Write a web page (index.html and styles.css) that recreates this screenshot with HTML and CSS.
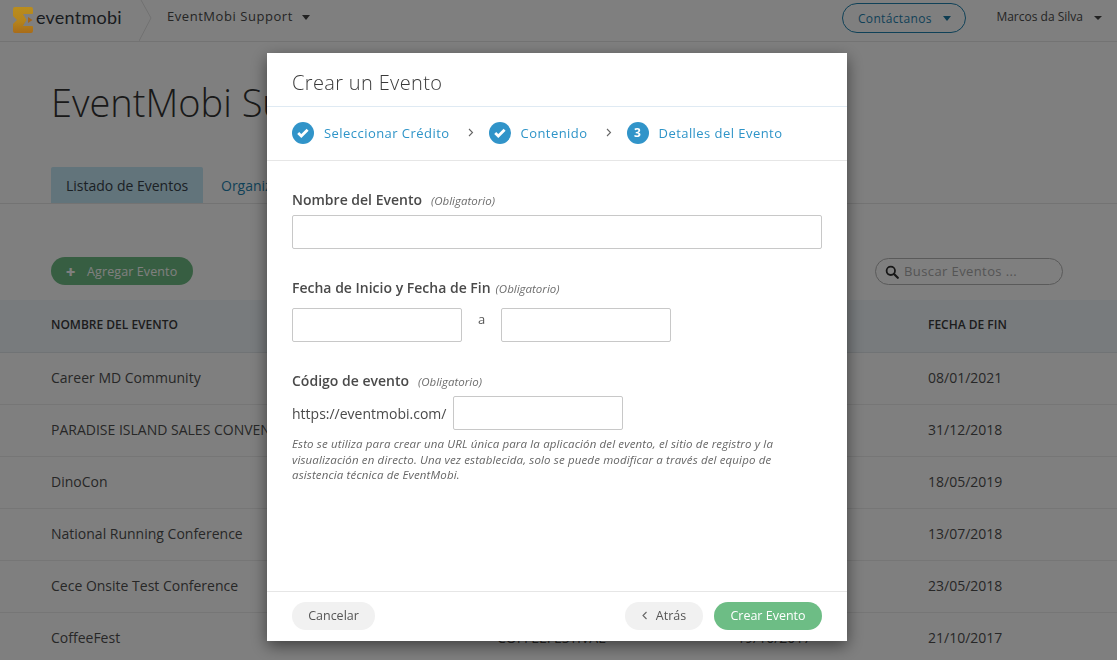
FILE: index.html
```html
<!DOCTYPE html>
<html lang="es">
<head>
<meta charset="utf-8">
<title>Crear un Evento</title>
<link rel="stylesheet" href="styles.css">
</head>
<body>
<div class="page">
  <header class="topbar">
    <div class="brand">
      <svg class="logo-mark" width="20" height="26" viewBox="0 0 20 26"><defs><linearGradient id="logo-fill" x1="0" y1="0" x2="0" y2="1"><stop offset="0" stop-color="#b98d1e"/><stop offset=".55" stop-color="#b5841c"/><stop offset="1" stop-color="#a86c1a"/></linearGradient></defs><path d="M2 0h16a2 2 0 0 1 2 2v4a1 1 0 0 1-1 1h-9l3.500 6l-3.500 6h9a1 1 0 0 1 1 1v4a2 2 0 0 1-2 2h-16a2 2 0 0 1-2-2v-7l4-4l-4-4v-7a2 2 0 0 1 2-2z" fill="url(#logo-fill)"/><path d="M15 10l4.500 3l-4.500 3z" fill="#a5651a"/></svg>
      <span class="logo-text">eventmobi</span>
    </div>
    <svg class="crumb" width="16" height="41" viewBox="0 0 16 41"><path d="M2 0l10 18l-12 23" fill="none" stroke="#e2e2e2"/></svg>
    <div class="org">EventMobi Support<span class="caret"></span></div>
    <div class="top-right">
      <div class="contact">Contáctanos<span class="caret caret-blue"></span></div>
      <div class="user">Marcos da Silva<span class="caret caret-small"></span></div>
    </div>
  </header>
  <h1 class="page-title">EventMobi Support</h1>
  <nav class="tabs">
    <div class="tab tab-active">Listado de Eventos</div>
    <div class="tab tab-link">Organizadores</div>
  </nav>
  <div class="tools">
    <div class="add-btn"><span class="plus">✚</span>Agregar Evento</div>
    <div class="search">
      <svg width="14" height="14" viewBox="0 0 14 14"><circle cx="5.800" cy="5.800" r="4.200" fill="none" stroke="#2e2e2e" stroke-width="1.800"/><path d="M9 9l3.800 3.800" stroke="#2e2e2e" stroke-width="2.200" stroke-linecap="round"/></svg>
      <span>Buscar Eventos ...</span>
    </div>
  </div>
  <div class="table">
    <div class="row row-head"><div>NOMBRE DEL EVENTO</div><div>CÓDIGO DE EVENTO</div><div>FECHA DE INICIO<span class="caret caret-small"></span></div><div>FECHA DE FIN</div></div>
    <div class="row"><div>Career MD Community</div><div>CAREERMD</div><div>06/01/2021</div><div>08/01/2021</div></div>
    <div class="row"><div>PARADISE ISLAND SALES CONVENTION</div><div>PARADISE</div><div>28/12/2018</div><div>31/12/2018</div></div>
    <div class="row"><div>DinoCon</div><div>DINOCON</div><div>16/05/2019</div><div>18/05/2019</div></div>
    <div class="row"><div>National Running Conference</div><div>RUNNING</div><div>11/07/2018</div><div>13/07/2018</div></div>
    <div class="row"><div>Cece Onsite Test Conference</div><div>CECETEST</div><div>21/05/2018</div><div>23/05/2018</div></div>
    <div class="row"><div>CoffeeFest</div><div>COFFEEFESTIVAL</div><div>19/10/2017</div><div>21/10/2017</div></div>
  </div>
</div>
<div class="overlay"></div>
<section class="modal">
  <h2 class="modal-title">Crear un Evento</h2>
  <div class="steps">
    <span class="step-icon"><svg width="12" height="10" viewBox="0 0 12 10"><path d="M1.200 5l3.100 3l6.300-6.300" fill="none" stroke="#fff" stroke-width="2.800"/></svg></span>
    <span class="step-label">Seleccionar Crédito</span>
    <svg class="chev" width="6" height="9" viewBox="0 0 6 9"><path d="M1 1l3.500 3.500l-3.500 3.500" fill="none" stroke="#666" stroke-width="1.100"/></svg>
    <span class="step-icon"><svg width="12" height="10" viewBox="0 0 12 10"><path d="M1.200 5l3.100 3l6.300-6.300" fill="none" stroke="#fff" stroke-width="2.800"/></svg></span>
    <span class="step-label">Contenido</span>
    <svg class="chev" width="6" height="9" viewBox="0 0 6 9"><path d="M1 1l3.500 3.500l-3.500 3.500" fill="none" stroke="#666" stroke-width="1.100"/></svg>
    <span class="step-icon step-num">3</span>
    <span class="step-label">Detalles del Evento</span>
  </div>
  <div class="modal-body">
    <div class="field field-name">
      <div class="label">Nombre del Evento<em>(Obligatorio)</em></div>
      <div class="input input-full"></div>
    </div>
    <div class="field field-date">
      <div class="label">Fecha de Inicio y Fecha de Fin<em class="em-near">(Obligatorio)</em></div>
      <div class="date-row">
        <div class="input input-date"></div>
        <span class="date-sep">a</span>
        <div class="input input-date"></div>
      </div>
    </div>
    <div class="field field-code">
      <div class="label">Código de evento<em>(Obligatorio)</em></div>
      <div class="code-row">
        <span>https://eventmobi.com/</span>
        <div class="input input-date"></div>
      </div>
      <p class="hint">Esto se utiliza para crear una URL única para la aplicación del evento, el sitio de registro y la visualización en directo. Una vez establecida, solo se puede modificar a través del equipo de asistencia técnica de EventMobi.</p>
    </div>
  </div>
  <footer class="modal-foot">
    <div class="btn btn-grey">Cancelar</div>
    <div class="foot-right">
      <div class="btn btn-grey btn-back"><svg width="6" height="9" viewBox="0 0 6 9"><path d="M4.500 1l-3.500 3.500l3.500 3.500" fill="none" stroke="#666" stroke-width="1.100"/></svg>Atrás</div>
      <div class="btn btn-green">Crear Evento</div>
    </div>
  </footer>
</section>
</body>
</html>
```
FILE: styles.css
```css
* { box-sizing: border-box; }
html, body { margin: 0; height: 100%; overflow: hidden; }
body { font-family: "Open Sans", "Liberation Sans", sans-serif; color: #4a4a4a; background: #fff; }

.page { width: 1117px; height: 660px; overflow: hidden; background: #fff; }

.topbar { height: 42px; display: flex; align-items: center; border-bottom: 1px solid #e6e6e6; padding-left: 13px; background: #fff; }
.brand { display: flex; align-items: center; width: 125px; }
.logo-mark { flex: none; margin-top: -2px; position: relative; z-index: 1; }
.logo-text { font-family: "Lato", sans-serif; font-size: 18px; color: #33383f; margin-left: 3px; margin-top: -8px; letter-spacing: .25px; }
.crumb { flex: none; margin-left: 1px; margin-right: 12px; margin-top: -1px; }
.org { font-size: 13px; letter-spacing: .55px; display: flex; align-items: center; margin-top: -9px; }
.org .caret { margin-top: 2px; }
.caret { display: inline-block; width: 0; height: 0; border-left: 4.500px solid transparent; border-right: 4.500px solid transparent; border-top: 5px solid #444; margin-left: 9px; }
.caret-blue { border-top-color: #1c7aa5; margin-left: 11px; }
.caret-small { border-left-width: 4px; border-right-width: 4px; border-top-width: 4px; }
.top-right { margin-left: auto; display: flex; align-items: center; margin-top: -5px; }
.contact { width: 124px; height: 30px; border: 1px solid #1f83b0; border-radius: 15px; color: #1f83b0; font-size: 12px; letter-spacing: .35px; display: flex; align-items: center; justify-content: center; }
.user { font-size: 12px; margin: -3px 15px 0 30px; display: flex; align-items: center; }
.user .caret { margin-left: 11px; margin-top: 2px; }

.page-title { margin: 35px 0 0 51px; font-weight: 300; font-size: 38px; line-height: 50px; color: #333; white-space: nowrap; }
.tabs { display: flex; margin-top: 40px; padding-left: 51px; height: 37px; border-bottom: 1px solid #e6e6e6; font-size: 14px; white-space: nowrap; }
.tab { height: 36px; padding: 0 15px; display: flex; align-items: center; }
.tab-active { background: #c4e8f6; border-radius: 2px 2px 0 0; color: #37424a; width: 152px; }
.tab-link { color: #1f83b0; padding-left: 18px; }

.tools { display: flex; justify-content: space-between; align-items: flex-end; height: 96px; padding: 0 54px 15px 51px; }
.add-btn { width: 142px; height: 28px; border-radius: 14px; background: #6fbd84; color: #fff; font-size: 12.500px; letter-spacing: .1px; display: flex; align-items: center; padding-left: 15px; }
.plus { font-size: 11px; margin-right: 12px; }
.search { width: 188px; height: 27px; border: 1px solid #b4b4b4; border-radius: 14px; display: flex; align-items: center; gap: 5px; padding: 0 0 2px 9px; font-size: 13px; color: #aaa; letter-spacing: .4px; }
.search svg { margin-top: 2px; }

.row { height: 52px; display: grid; grid-template-columns: 446px 240px 191px 1fr; padding: 0 0 2px 51px; align-items: center; border-bottom: 1px solid #ececec; font-size: 14px; color: #4f4f4f; white-space: nowrap; }
.row-head { height: 53px; padding-bottom: 3px; background: #f0f6fa; font-size: 12px; font-weight: 600; color: #3a3a3a; border-bottom-color: #e0e6ea; }
.row .caret { margin-left: 4px; }

.overlay { position: fixed; inset: 0; background: rgba(0, 0, 0, .5); }

.modal { position: fixed; z-index: 2; left: 267px; top: 53px; width: 580px; height: 588px; background: #fff; box-shadow: 0 5px 15px rgba(0, 0, 0, .5); display: flex; flex-direction: column; }
.modal-title { margin: 0; height: 54px; padding: 15px 25px 0; font-weight: 300; font-size: 20px; line-height: 30px; letter-spacing: .35px; color: #3a3a3a; border-bottom: 1px solid #dfeaf3; }
.steps { height: 54px; flex: none; display: flex; align-items: center; padding: 0 0 2px 25px; border-bottom: 1px solid #e6e6e6; font-size: 13px; letter-spacing: .45px; color: #2e94c8; }
.step-icon { width: 22px; height: 22px; border-radius: 50%; background: #3194c9; display: flex; align-items: center; justify-content: center; flex: none; }
.step-num { color: #fff; font-weight: 700; font-size: 12px; letter-spacing: 0; }
.step-label { margin-left: 10px; }
.chev { margin: 0 15px 0 18px; flex: none; }

.modal-body { flex: 1; padding: 0 25px; }
.label { font-size: 14px; font-weight: 600; color: #4a4a4a; line-height: 18px; }
.label em { font-weight: 400; font-size: 11.500px; color: #6e6e6e; margin-left: 9px; }
.label em.em-near { margin-left: 5px; }
.field-name { margin-top: 30px; }
.field-date { margin-top: 30px; }
.field-code { margin-top: 30px; }
.input { height: 34px; border: 1px solid #c8c8c8; border-radius: 2px; background: #fff; }
.input-full { width: 530px; margin-top: 5px; }
.input-date { width: 170px; }
.date-row { display: flex; align-items: center; margin-top: 10px; }
.date-sep { width: 39px; text-align: center; font-size: 13px; margin-top: -12px; color: #555; }
.code-row { display: flex; align-items: center; gap: 7px; margin-top: 5px; font-size: 14px; color: #4a4a4a; }
.hint { margin: 6px 0 0; width: 500px; font-size: 11.500px; line-height: 15.500px; letter-spacing: .14px; font-style: italic; color: #666; }

.modal-foot { height: 50px; flex: none; border-top: 1px solid #e6e6e6; display: flex; justify-content: space-between; align-items: center; padding: 0 25px 2px; }
.foot-right { display: flex; gap: 11px; }
.btn { height: 28px; border-radius: 14px; font-size: 12.500px; display: flex; align-items: center; justify-content: center; }
.btn-grey { background: #f1f1f1; color: #555; width: 83px; }
.btn-back { width: 78px; gap: 8px; }
.btn-green { background: #6dbd85; color: #fff; width: 108px; }
```
